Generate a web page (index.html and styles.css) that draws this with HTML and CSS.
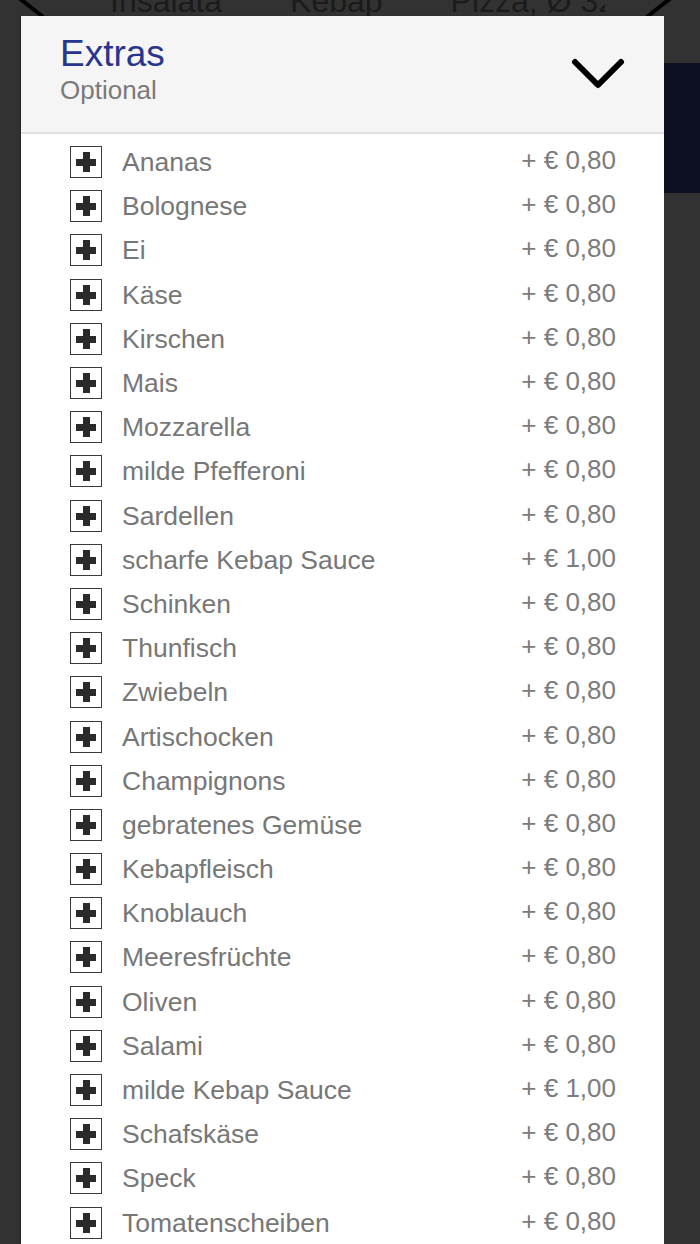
FILE: index.html
```html
<!DOCTYPE html>
<html lang="de">
<head>
<meta charset="utf-8">
<title>Extras</title>
<link rel="stylesheet" href="styles.css">
</head>
<body>
<div class="page">
  <nav class="nav">
    <svg class="nav-arrow nav-arrow-left" width="30" height="44" viewBox="0 0 30 44"><path d="M28 4 L5 22 L28 40" fill="none" stroke="#000" stroke-width="4" stroke-linecap="round" stroke-linejoin="round"/></svg>
    <div class="tabs">
      <span class="tab">Insalata</span>
      <span class="tab">Kebap</span>
      <span class="tab">Pizza, Ø 32 cm</span>
    </div>
    <svg class="nav-arrow nav-arrow-right" width="30" height="44" viewBox="0 0 30 44"><path d="M2 4 L25 22 L2 40" fill="none" stroke="#000" stroke-width="4" stroke-linecap="round" stroke-linejoin="round"/></svg>
  </nav>
  <div class="hero"></div>
</div>

<div class="modal">
  <header class="modal-head">
    <div class="titles">
      <div class="title">Extras</div>
      <div class="subtitle">Optional</div>
    </div>
    <svg class="collapse" width="54" height="32" viewBox="0 0 54 32"><path d="M4 4 L27 27 L50 4" fill="none" stroke="#000" stroke-width="6" stroke-linecap="round" stroke-linejoin="round"/></svg>
  </header>
  <ul class="list">
    <li class="row"><span class="check"></span><span class="name">Ananas</span><span class="price">+ € 0,80</span></li>
    <li class="row"><span class="check"></span><span class="name">Bolognese</span><span class="price">+ € 0,80</span></li>
    <li class="row"><span class="check"></span><span class="name">Ei</span><span class="price">+ € 0,80</span></li>
    <li class="row"><span class="check"></span><span class="name">Käse</span><span class="price">+ € 0,80</span></li>
    <li class="row"><span class="check"></span><span class="name">Kirschen</span><span class="price">+ € 0,80</span></li>
    <li class="row"><span class="check"></span><span class="name">Mais</span><span class="price">+ € 0,80</span></li>
    <li class="row"><span class="check"></span><span class="name">Mozzarella</span><span class="price">+ € 0,80</span></li>
    <li class="row"><span class="check"></span><span class="name">milde Pfefferoni</span><span class="price">+ € 0,80</span></li>
    <li class="row"><span class="check"></span><span class="name">Sardellen</span><span class="price">+ € 0,80</span></li>
    <li class="row"><span class="check"></span><span class="name">scharfe Kebap Sauce</span><span class="price">+ € 1,00</span></li>
    <li class="row"><span class="check"></span><span class="name">Schinken</span><span class="price">+ € 0,80</span></li>
    <li class="row"><span class="check"></span><span class="name">Thunfisch</span><span class="price">+ € 0,80</span></li>
    <li class="row"><span class="check"></span><span class="name">Zwiebeln</span><span class="price">+ € 0,80</span></li>
    <li class="row"><span class="check"></span><span class="name">Artischocken</span><span class="price">+ € 0,80</span></li>
    <li class="row"><span class="check"></span><span class="name">Champignons</span><span class="price">+ € 0,80</span></li>
    <li class="row"><span class="check"></span><span class="name">gebratenes Gemüse</span><span class="price">+ € 0,80</span></li>
    <li class="row"><span class="check"></span><span class="name">Kebapfleisch</span><span class="price">+ € 0,80</span></li>
    <li class="row"><span class="check"></span><span class="name">Knoblauch</span><span class="price">+ € 0,80</span></li>
    <li class="row"><span class="check"></span><span class="name">Meeresfrüchte</span><span class="price">+ € 0,80</span></li>
    <li class="row"><span class="check"></span><span class="name">Oliven</span><span class="price">+ € 0,80</span></li>
    <li class="row"><span class="check"></span><span class="name">Salami</span><span class="price">+ € 0,80</span></li>
    <li class="row"><span class="check"></span><span class="name">milde Kebap Sauce</span><span class="price">+ € 1,00</span></li>
    <li class="row"><span class="check"></span><span class="name">Schafskäse</span><span class="price">+ € 0,80</span></li>
    <li class="row"><span class="check"></span><span class="name">Speck</span><span class="price">+ € 0,80</span></li>
    <li class="row"><span class="check"></span><span class="name">Tomatenscheiben</span><span class="price">+ € 0,80</span></li>
  </ul>
</div>
</body>
</html>
```
FILE: styles.css
```css
html, body {
  margin: 0;
  padding: 0;
  height: 1244px;
  overflow: hidden;
}
body {
  background: #323232;
  font-family: "Liberation Sans", Arial, sans-serif;
  position: relative;
}

.page {
  padding-top: 1px;
}
.nav {
  display: flex;
  align-items: flex-start;
  height: 60px;
  margin-top: -31px;
}
.nav-arrow {
  flex: none;
  margin-top: 6px;
}
.nav-arrow-left {
  margin-left: 14px;
}
.nav-arrow-right {
  margin-left: 41px;
}
.tabs {
  display: flex;
  gap: 68px;
  width: 510px;
  margin-left: 51px;
  margin-top: 15px;
  padding-left: 15px;
  box-sizing: border-box;
  overflow: hidden;
  white-space: nowrap;
  font-size: 32px;
  line-height: 32px;
  color: #1b1b1b;
}
.tab {
  flex: none;
}
.hero {
  height: 130px;
  margin-top: 33px;
  margin-left: 40px;
  background: #0d1020;
}

.modal {
  position: absolute;
  top: 16px;
  left: 21px;
  width: 643px;
  bottom: 0;
  background: #fff;
  overflow: hidden;
  box-shadow: -1px 0 1px rgba(0, 0, 0, 0.25);
}
.modal-head {
  display: flex;
  align-items: center;
  justify-content: space-between;
  height: 116px;
  padding: 0 39px;
  background: #f5f5f5;
  border-bottom: 2px solid #e0e0e0;
}
.titles {
  align-self: flex-start;
  display: flex;
  flex-direction: column;
  padding-top: 19px;
}
.title {
  font-size: 37px;
  line-height: 37px;
  color: #28358f;
}
.subtitle {
  margin-top: 5px;
  font-size: 26px;
  line-height: 26px;
  color: #7a7a7a;
}
.collapse {
  flex: none;
}

.list {
  list-style: none;
  margin: 0;
  padding: 6px 48px 0 49px;
}
.row {
  display: flex;
  align-items: center;
  height: 44.2px;
}
.check {
  flex: none;
  position: relative;
  width: 32px;
  height: 32px;
  box-sizing: border-box;
  border: 1px solid #3a3a3a;
  background: #fff;
}
.check::before,
.check::after {
  content: "";
  position: absolute;
  background: #2a2a2a;
}
.check::before {
  left: 5px;
  top: 12px;
  width: 20px;
  height: 7px;
}
.check::after {
  left: 12px;
  top: 5px;
  width: 7px;
  height: 20px;
}
.name {
  flex: 1;
  margin-left: 20px;
  font-size: 26.5px;
  line-height: 30px;
  color: #777;
  white-space: nowrap;
}
.price {
  flex: none;
  margin-bottom: 4px;
  font-size: 26px;
  line-height: 30px;
  color: #7c7c7c;
  white-space: nowrap;
}
```
